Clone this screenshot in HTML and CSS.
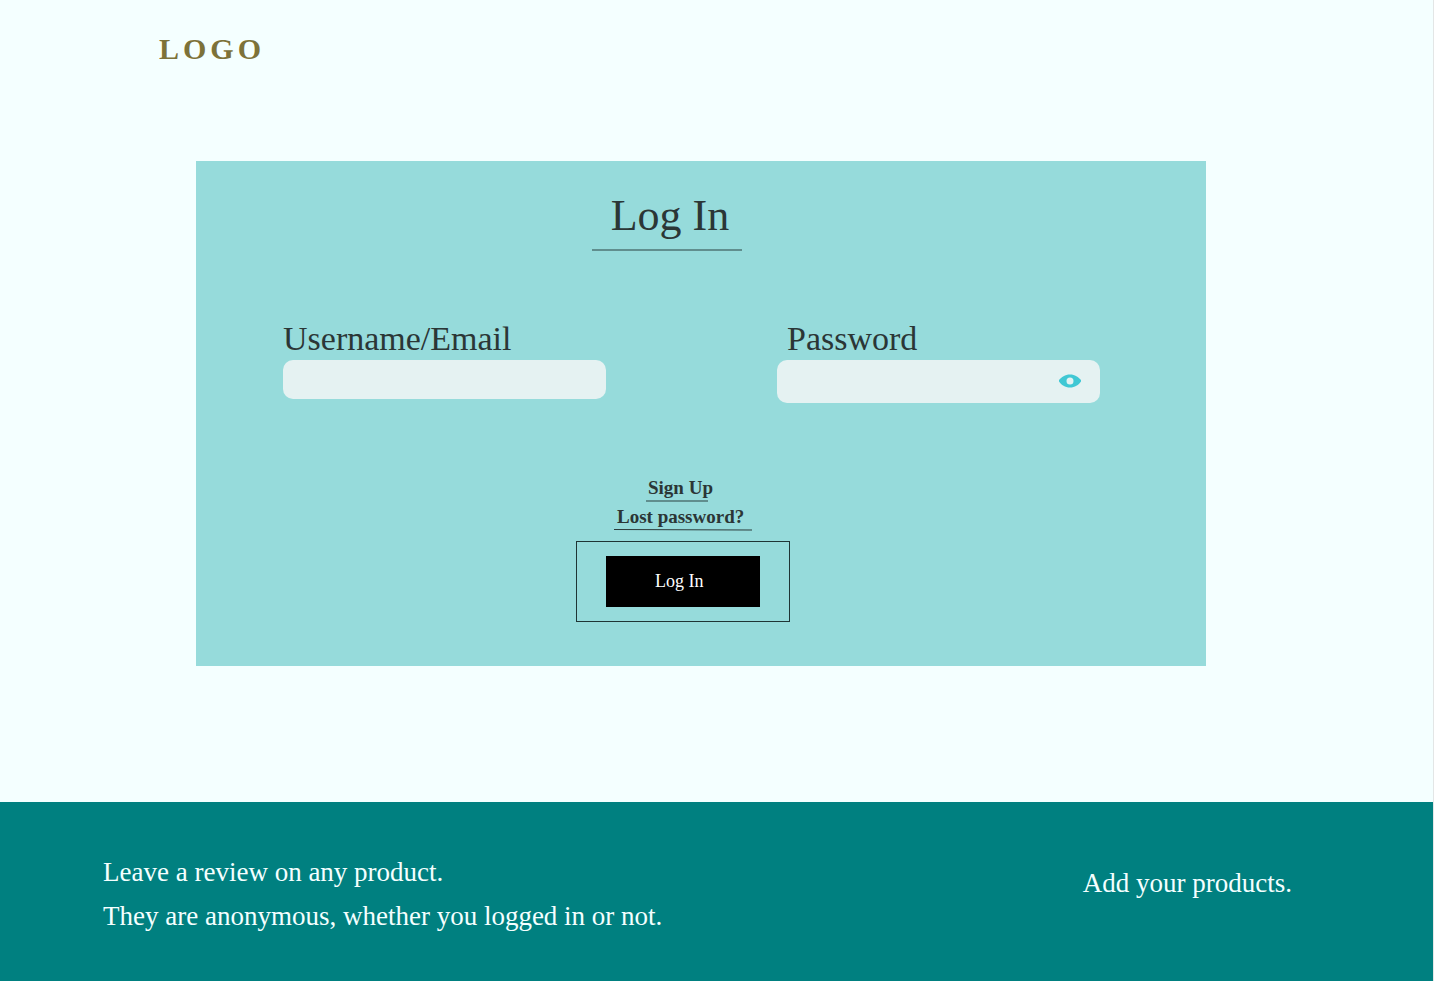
FILE: index.html
```
<!DOCTYPE html>
<html lang="en">
<head>
<meta charset="utf-8">
<meta name="viewport" content="width=device-width, initial-scale=1">
<title>Log In</title>
<link rel="stylesheet" href="styles.css">
</head>
<body>
<div class="page">
  <header class="header"><a class="logo" href="#">LOGO</a></header>
  <main class="main">
    <form class="card">
      <div class="heading"><h1 class="title">Log In</h1></div>
      <div class="fields">
        <div class="field">
          <label class="label" for="user">Username/Email</label>
          <input class="input" id="user" type="text">
        </div>
        <div class="field">
          <label class="label label-inset" for="password">Password</label>
          <div class="password">
            <input class="input-bare" id="password" type="password">
            <button class="eye" type="button" aria-label="Show password">
              <svg width="22" height="14" viewBox="0 0 22 14" aria-hidden="true"><path fill="#40c8d4" fill-rule="evenodd" d="M11 0.500C6 0.500 2.500 3 0 6V7.500C2.500 11 6 13.500 11 13.500S19.500 11 22 7.500V6C19.500 3 16 0.500 11 0.500ZM11 3.500A3.500 3.500 0 1 1 11 10.500A3.500 3.500 0 1 1 11 3.500Z"/></svg>
            </button>
          </div>
        </div>
      </div>
      <div class="actions">
        <a class="link signup" href="#">Sign Up</a>
        <a class="link lost" href="#">Lost password?
          <svg class="rule" width="138" height="2" viewBox="0 0 138 2" aria-hidden="true"><path d="M0 .5L138 1" stroke="#2b3b3b"/></svg>
        </a>
        <div class="frame"><button class="submit" type="submit">Log In</button></div>
      </div>
    </form>
  </main>
  <footer class="footer">
    <div class="note">
      <p>Leave a review on any product.</p>
      <p>They are anonymous, whether you logged in or not.</p>
    </div>
    <a class="add" href="#">Add your products.</a>
  </footer>
</div>
</body>
</html>
```
FILE: styles.css
```
* { box-sizing: border-box; }
body {
  margin: 0;
  background: #fff;
  color: #2b3636;
  font-family: "Liberation Serif", "Times New Roman", serif;
}
a { color: inherit; text-decoration: none; }
.page {
  display: flex;
  flex-direction: column;
  min-height: 100vh;
  margin-right: 2px;
  border-right: 1px solid #e3e6e6;
  background: #f4ffff;
}
.header { padding: 32px 159px 0; }
.logo {
  color: #7d7239;
  font-size: 30px;
  font-weight: bold;
  line-height: 34px;
  letter-spacing: 4px;
}
.main { flex: 1; padding: 95px 227px 136px 196px; }
.card {
  padding: 30px 106px 44px 87px;
  background: #96dbdb;
}
.heading {
  display: flex;
  justify-content: center;
  padding-right: 49px;
}
.title {
  width: 150px;
  margin: 0;
  padding: 0 0 8px 6px;
  border-bottom: 2px solid #608e8e;
  font-size: 44px;
  font-weight: normal;
  line-height: 50px;
  text-align: center;
}
.fields {
  display: flex;
  justify-content: space-between;
  gap: 32px;
  margin-top: 68px;
}
.field { flex: 0 1 323px; min-width: 0; }
.label {
  display: block;
  padding-bottom: 2px;
  font-size: 34px;
  line-height: 39px;
}
.label-inset { padding-left: 10px; }
.input {
  display: block;
  width: 100%;
  height: 39px;
  padding: 0 12px;
  border: 0;
  border-radius: 10px;
  background: #e5f2f2;
  font: inherit;
  font-size: 19px;
}
.password {
  display: flex;
  align-items: center;
  height: 43px;
  padding: 0 19px 2px 12px;
  border-radius: 10px;
  background: #e5f2f2;
}
.input-bare {
  flex: 1;
  min-width: 0;
  border: 0;
  background: transparent;
  font: inherit;
  font-size: 19px;
}
.eye {
  display: flex;
  padding: 0;
  border: 0;
  background: none;
}
.actions {
  display: flex;
  flex-direction: column;
  align-items: center;
  margin-top: 72px;
  padding-right: 17px;
}
.link {
  font-size: 19px;
  font-weight: bold;
  line-height: 25px;
  white-space: nowrap;
}
.signup {
  width: 62px;
  margin-right: 12px;
  padding-left: 2px;
  border-bottom: 2px solid #608e8e;
}
.lost {
  width: 138px;
  margin-top: 2px;
  padding-left: 3px;
}
.rule { display: block; margin-left: -3px; }
.frame {
  margin-top: 10px;
  padding: 14px 29px;
  border: 1px solid #1f3535;
}
.submit {
  display: block;
  width: 154px;
  height: 51px;
  padding: 0 0 0 49px;
  border: 0;
  background: #000;
  color: #fff;
  font: inherit;
  font-size: 18px;
  text-align: left;
}
.footer {
  display: flex;
  justify-content: space-between;
  padding: 48px 141px 44px 103px;
  background: #008080;
  color: #f4ffff;
  font-size: 27px;
  line-height: 44px;
}
.note p { margin: 0; }
.add { padding-top: 11px; }
```
